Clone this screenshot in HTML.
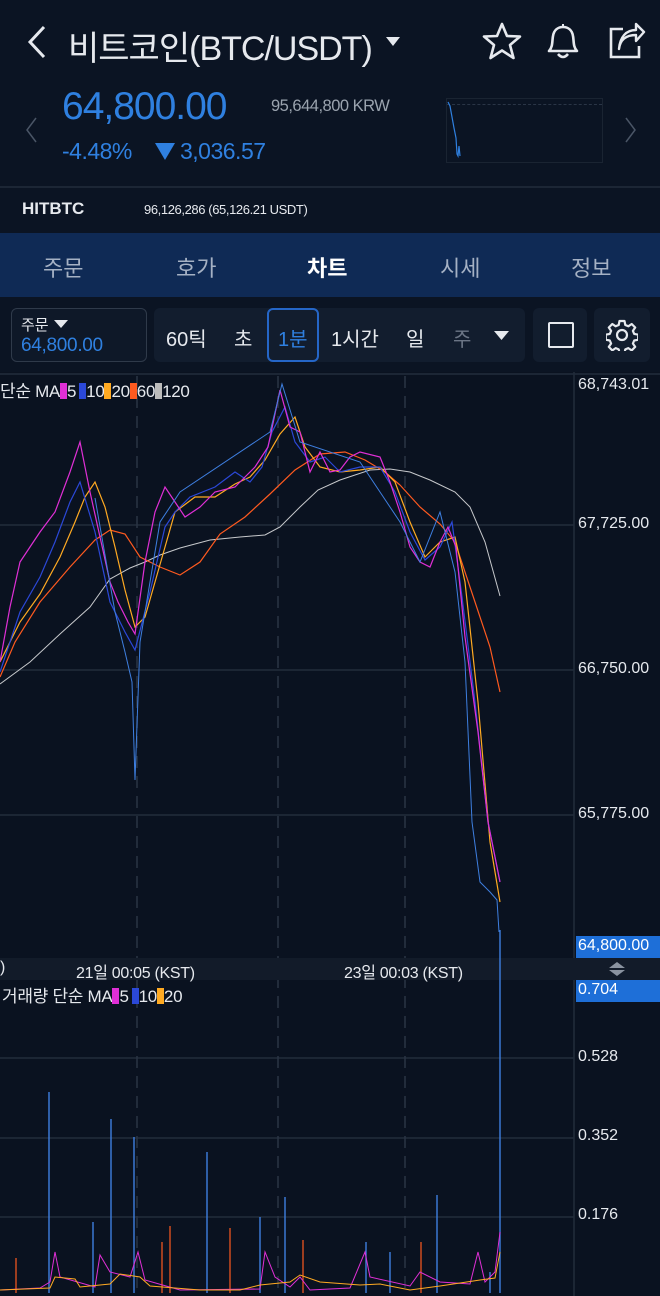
<!DOCTYPE html>
<html><head><meta charset="utf-8"><style>
*{margin:0;padding:0;box-sizing:border-box}
body{width:660px;height:1296px;background:#0b1423;font-family:"Liberation Sans","Noto Sans CJK KR",sans-serif;color:#e6e9ee;position:relative;overflow:hidden}
.a{position:absolute;white-space:nowrap}
.sw{display:inline-block;width:7px;height:16px;vertical-align:-2px}
</style></head><body>
<svg class="a" style="left:24px;top:24px" width="24" height="36" viewBox="0 0 24 36"><path d="M20 3 L6 18 L20 33" fill="none" stroke="#e6e9ee" stroke-width="3"/></svg>
<div class="a" style="left:68px;top:21px;font-size:34px;color:#e6e9ee;letter-spacing:-1px">비트코인(BTC/USDT)</div>
<svg class="a" style="left:386px;top:37px" width="14" height="9"><path d="M0 0H14L7 9Z" fill="#e6e9ee"/></svg>
<svg class="a" style="left:482px;top:22px" width="40" height="38" viewBox="0 0 40 38"><path d="M20 2 L25 14 L38 14.5 L28 23 L31.5 36 L20 28.5 L8.5 36 L12 23 L2 14.5 L15 14 Z" fill="none" stroke="#e6e9ee" stroke-width="2.6" stroke-linejoin="round"/></svg>
<svg class="a" style="left:543px;top:21px" width="40" height="40" viewBox="0 0 40 40"><path d="M6 30 C10 26 9 20 10 15 C11 9 15 6 20 6 C25 6 29 9 30 15 C31 20 30 26 34 30 Z" fill="none" stroke="#e6e9ee" stroke-width="2.6" stroke-linejoin="round"/><path d="M15 33 Q20 39 25 33" fill="none" stroke="#e6e9ee" stroke-width="2.6"/><path d="M19 3h2v3h-2z" fill="#e6e9ee"/></svg>
<svg class="a" style="left:606px;top:22px" width="40" height="38" viewBox="0 0 40 38"><path d="M17 7 H5 V35 H33 V24" fill="none" stroke="#e6e9ee" stroke-width="2.6"/><path d="M13 27 C14 18 20 13 30 13 V19 L38 10 L30 2 V8 C20 8 14 15 13 27Z" fill="none" stroke="#e6e9ee" stroke-width="2.4" stroke-linejoin="round"/></svg>
<svg class="a" style="left:24px;top:116px" width="14" height="28"><path d="M12 2 L3 14 L12 26" fill="none" stroke="#4a5566" stroke-width="1.5"/></svg>
<svg class="a" style="left:624px;top:116px" width="14" height="28"><path d="M2 2 L11 14 L2 26" fill="none" stroke="#4a5566" stroke-width="1.5"/></svg>
<div class="a" style="left:62px;top:85px;font-size:39px;color:#2f80e0;letter-spacing:-1px">64,800.00</div>
<div class="a" style="left:271px;top:97px;font-size:16.5px;color:#9aa3ae;letter-spacing:-0.5px">95,644,800 KRW</div>
<div class="a" style="left:62px;top:138px;font-size:23px;color:#2f80e0;letter-spacing:-0.5px">-4.48%</div>
<svg class="a" style="left:155px;top:143px" width="20" height="17"><path d="M0 0H20L10 17Z" fill="#2f80e0"/></svg>
<div class="a" style="left:180px;top:138px;font-size:23px;color:#2f80e0;letter-spacing:-0.5px">3,036.57</div>
<div class="a" style="left:446px;top:98px;width:157px;height:65px;border:1px solid #1a2432"></div>
<div class="a" style="left:447px;top:104px;width:155px;border-top:1px dashed #2a3546"></div>
<svg class="a" style="left:446px;top:98px" width="20" height="65"><path d="M2 4 L4 8 L8 30 L10 40 L11 56 L12 58 L13 48 L14 58" fill="none" stroke="#2f80e0" stroke-width="1.2"/></svg>
<div class="a" style="left:0;top:186px;width:660px;height:2px;background:#1c2635"></div>
<div class="a" style="left:22px;top:199px;font-size:17px;font-weight:bold;color:#e6e9ee">HITBTC</div>
<div class="a" style="left:144px;top:202px;font-size:13px;color:#e6e9ee;letter-spacing:-0.4px">96,126,286 (65,126.21 USDT)</div>
<div class="a" style="left:0;top:233px;width:660px;height:64px;background:#0f2a55"></div>
<div class="a" style="left:43px;top:251px;font-size:22px;color:#a5b1c4">주문</div>
<div class="a" style="left:176px;top:251px;font-size:22px;color:#a5b1c4">호가</div>
<div class="a" style="left:307px;top:251px;font-size:22px;color:#fff;font-weight:bold">차트</div>
<div class="a" style="left:440px;top:251px;font-size:22px;color:#a5b1c4">시세</div>
<div class="a" style="left:571px;top:251px;font-size:22px;color:#a5b1c4">정보</div>
<div class="a" style="left:11px;top:308px;width:136px;height:54px;border:1.5px solid #2f3a4a;border-radius:6px;background:#0e1828"></div>
<div class="a" style="left:21px;top:314px;font-size:15px;color:#e6e9ee">주문</div>
<svg class="a" style="left:54px;top:320px" width="14" height="8"><path d="M0 0H14L7 8Z" fill="#e6e9ee"/></svg>
<div class="a" style="left:21px;top:335px;font-size:19px;color:#2f80e0;letter-spacing:-0.3px">64,800.00</div>
<div class="a" style="left:154px;top:308px;width:371px;height:54px;border-radius:6px;background:#121d2e"></div>
<div class="a" style="left:166px;top:323px;font-size:20px;color:#e6e9ee">60틱</div>
<div class="a" style="left:234px;top:323px;font-size:20px;color:#e6e9ee">초</div>
<div class="a" style="left:267px;top:308px;width:52px;height:54px;border:2px solid #2566c7;border-radius:6px"></div>
<div class="a" style="left:278px;top:323px;font-size:20px;color:#2f80e0">1분</div>
<div class="a" style="left:331px;top:323px;font-size:20px;color:#e6e9ee">1시간</div>
<div class="a" style="left:406px;top:323px;font-size:20px;color:#e6e9ee">일</div>
<div class="a" style="left:453px;top:323px;font-size:20px;color:#6b7585">주</div>
<svg class="a" style="left:494px;top:331px" width="15" height="9"><path d="M0 0H15L7.5 9Z" fill="#e6e9ee"/></svg>
<div class="a" style="left:533px;top:308px;width:54px;height:54px;border-radius:6px;background:#121d2e"></div>
<div class="a" style="left:548px;top:322px;width:26px;height:26px;border:2.5px solid #e6e9ee;border-radius:2px"></div>
<div class="a" style="left:594px;top:308px;width:56px;height:54px;border-radius:6px;background:#121d2e"></div>
<svg class="a" style="left:606px;top:319px" width="32" height="32" viewBox="0 0 32 32"><path d="M13.5 2h5l.8 4 3 1.3 3.4-2.3 3.5 3.5-2.3 3.4 1.3 3 4 .8v5l-4 .8-1.3 3 2.3 3.4-3.5 3.5-3.4-2.3-3 1.3-.8 4h-5l-.8-4-3-1.3-3.4 2.3-3.5-3.5 2.3-3.4-1.3-3-4-.8v-5l4-.8 1.3-3-2.3-3.4 3.5-3.5 3.4 2.3 3-1.3z" fill="none" stroke="#e6e9ee" stroke-width="2.2" stroke-linejoin="round"/><circle cx="16" cy="16" r="5" fill="none" stroke="#e6e9ee" stroke-width="2.2"/></svg>
<svg class="a" style="left:0;top:372px" width="660" height="924">
<rect x="0" y="0" width="660" height="924" fill="#0a1220"/>
<line x1="0" y1="2" x2="660" y2="2" stroke="#1c2635" stroke-width="2"/>
<g stroke="#222c3b" stroke-width="1.5"><line x1="0" y1="153" x2="574" y2="153"/><line x1="0" y1="298" x2="574" y2="298"/><line x1="0" y1="443" x2="574" y2="443"/><line x1="0" y1="686" x2="574" y2="686"/><line x1="0" y1="766" x2="574" y2="766"/><line x1="0" y1="845" x2="574" y2="845"/></g>
<g stroke="#2a3444" stroke-width="1.5" stroke-dasharray="12 8"><line x1="137" y1="4" x2="137" y2="924"/><line x1="278" y1="4" x2="278" y2="924"/><line x1="405" y1="4" x2="405" y2="924"/></g>
<line x1="574" y1="0" x2="574" y2="924" stroke="#222c3b" stroke-width="1.5"/>
<rect x="0" y="586" width="660" height="22" fill="#121b29"/>
<polyline fill="none" stroke="#c7c9cc" stroke-width="1" points="0,312 30,290 60,262 90,235 110,207 130,196 145,190 160,183 180,176 210,168 240,165 265,163 280,155 300,135 318,118 340,108 370,98 390,97 410,100 430,108 455,120 470,135 485,170 500,224"/>
<polyline fill="none" stroke="#ff5a1f" stroke-width="1.2" points="0,305 15,270 40,230 70,195 95,168 110,158 125,162 140,185 160,195 180,203 200,190 220,162 245,145 270,122 295,98 320,82 345,80 365,88 385,100 400,113 420,135 440,152 455,170 470,215 490,275 500,320"/>
<polyline fill="none" stroke="#ffaa22" stroke-width="1.2" points="0,290 20,250 40,222 60,185 75,150 85,125 95,110 105,135 115,175 125,218 135,255 145,245 155,210 165,175 175,140 195,125 215,125 235,112 250,105 265,88 280,62 295,45 305,75 320,95 340,100 360,98 380,95 395,110 410,150 425,185 440,170 455,165 465,210 478,330 490,470 500,530"/>
<polyline fill="none" stroke="#2b48d8" stroke-width="1.2" points="0,300 20,240 40,205 55,170 70,130 80,110 95,160 110,230 125,260 135,278 150,220 165,155 175,140 190,125 215,115 235,100 250,110 262,95 272,60 285,35 295,70 310,90 325,85 340,100 360,95 380,95 395,120 410,160 425,188 440,175 452,150 462,225 475,330 488,450 500,510"/>
<polyline fill="none" stroke="#e02fd6" stroke-width="1.2" points="0,290 10,235 20,190 30,175 40,160 55,140 70,100 80,70 90,120 100,165 110,210 118,230 128,250 135,262 145,190 155,140 165,115 175,130 185,145 200,135 215,120 235,115 245,105 255,95 268,75 280,18 290,55 300,60 310,100 320,80 330,100 340,98 350,85 360,80 380,85 390,110 400,140 410,175 420,190 430,195 440,170 448,155 456,175 465,265 478,360 488,450 500,510"/>
<polyline fill="none" stroke="#3e7fe0" stroke-width="1" points="95,126 115,240 125,280 132,310 135,408 140,270 160,150 180,120 270,60 282,12 300,70 360,90 400,150 420,190 440,140 455,200 465,290 472,450 480,510 490,520 497,528 499,560"/>
<g stroke="#3e7fe0" stroke-width="1.4"><line x1="49" y1="921" x2="49" y2="720"/><line x1="111" y1="921" x2="111" y2="747"/><line x1="93" y1="921" x2="93" y2="850"/><line x1="134" y1="921" x2="134" y2="765"/><line x1="207" y1="921" x2="207" y2="780"/><line x1="260" y1="921" x2="260" y2="845"/><line x1="285" y1="921" x2="285" y2="825"/><line x1="366" y1="921" x2="366" y2="870"/><line x1="390" y1="921" x2="390" y2="880"/><line x1="437" y1="921" x2="437" y2="823"/><line x1="490" y1="921" x2="490" y2="900"/><line x1="500" y1="921" x2="500" y2="558"/></g>
<g stroke="#ff5a1f" stroke-width="1.2"><line x1="162" y1="921" x2="162" y2="870"/><line x1="170" y1="921" x2="170" y2="854"/><line x1="230" y1="921" x2="230" y2="856"/><line x1="303" y1="921" x2="303" y2="868"/><line x1="421" y1="921" x2="421" y2="870"/><line x1="16" y1="921" x2="16" y2="886"/></g>
<polyline fill="none" stroke="#e02fd6" stroke-width="1" points="0,918 40,916 50,910 55,880 60,905 95,915 100,883 110,900 130,905 138,880 145,908 180,918 260,917 265,880 275,905 290,915 300,905 310,918 350,916 365,880 370,905 410,914 420,900 440,910 470,912 478,880 485,910 495,900 500,860"/>
<polyline fill="none" stroke="#ffaa22" stroke-width="1" points="0,918 50,916 55,905 75,907 80,915 110,912 120,902 140,905 150,914 200,918 240,918 260,913 290,910 300,903 320,910 360,913 380,912 410,918 440,914 460,911 480,908 495,906 500,880"/>
</svg>
<div class="a" style="left:0;top:377px;font-size:17px;color:#e6e9ee;letter-spacing:-0.3px">단순 MA<span class="sw" style="background:#e02fd6"></span>5<span class="sw" style="background:#2b48d8;margin-left:3px"></span>10<span class="sw" style="background:#ffaa22"></span>20<span class="sw" style="background:#ff5a1f"></span>60<span class="sw" style="background:#bbb"></span>120</div>
<div class="a" style="left:578px;top:376px;font-size:16px;color:#e6e9ee">68,743.01</div>
<div class="a" style="left:578px;top:515px;font-size:16px;color:#e6e9ee">67,725.00</div>
<div class="a" style="left:578px;top:660px;font-size:16px;color:#e6e9ee">66,750.00</div>
<div class="a" style="left:578px;top:805px;font-size:16px;color:#e6e9ee">65,775.00</div>
<div class="a" style="left:576px;top:936px;width:84px;height:22px;background:#1e6fd8;font-size:16px;color:#fff;padding:1px 0 0 2px">64,800.00</div>
<div class="a" style="left:0;top:959px;font-size:16px;color:#e6e9ee">)</div>
<div class="a" style="left:76px;top:959px;font-size:16px;color:#e6e9ee;letter-spacing:-0.3px">21일 00:05 (KST)</div>
<div class="a" style="left:344px;top:959px;font-size:16px;color:#e6e9ee;letter-spacing:-0.3px">23일 00:03 (KST)</div>
<svg class="a" style="left:607px;top:961px" width="20" height="16"><path d="M2 7 L10 1 L18 7Z M2 9 L10 15 L18 9Z" fill="#8a93a0"/></svg>
<div class="a" style="left:576px;top:980px;width:84px;height:22px;background:#1e6fd8;font-size:16px;color:#fff;padding:1px 0 0 2px">0.704</div>
<div class="a" style="left:2px;top:982px;font-size:17px;color:#e6e9ee;letter-spacing:-0.3px">거래량 단순 MA<span class="sw" style="background:#e02fd6"></span>5<span class="sw" style="background:#2b48d8;margin-left:3px"></span>10<span class="sw" style="background:#ffaa22"></span>20</div>
<div class="a" style="left:578px;top:1048px;font-size:16px;color:#e6e9ee">0.528</div>
<div class="a" style="left:578px;top:1127px;font-size:16px;color:#e6e9ee">0.352</div>
<div class="a" style="left:578px;top:1206px;font-size:16px;color:#e6e9ee">0.176</div>
</body></html>
